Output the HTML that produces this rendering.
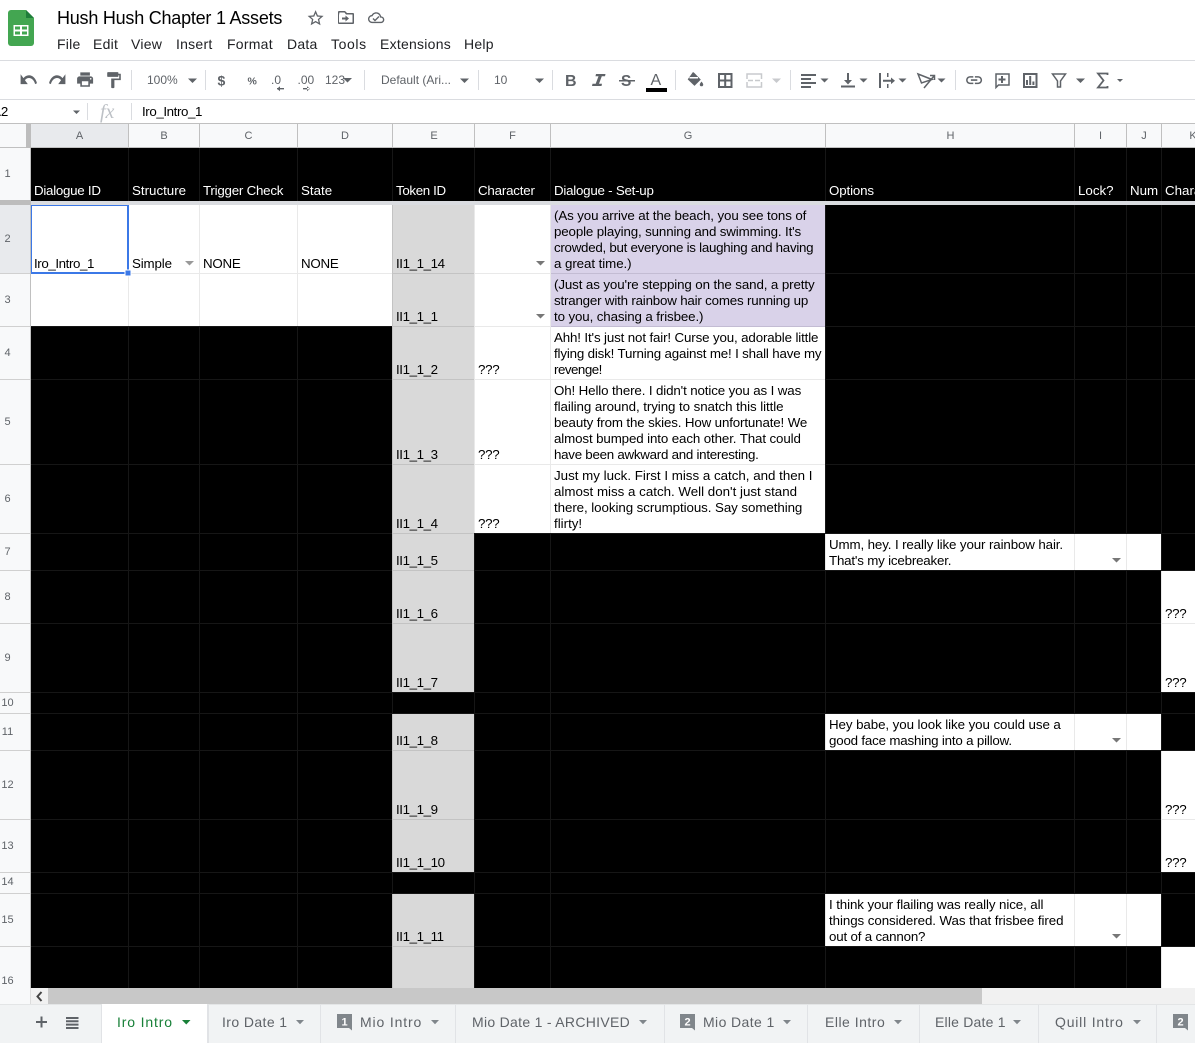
<!DOCTYPE html>
<html lang="en"><head><meta charset="utf-8"><title>Hush Hush Chapter 1 Assets</title>
<style>
html,body{margin:0;padding:0;background:#fff}
#p{position:relative;width:1195px;height:1043px;overflow:hidden;font-family:"Liberation Sans",Arial,sans-serif}
svg{position:absolute;left:0;top:0}
.t,.w,.m{position:absolute;white-space:pre;font-size:13.33px;line-height:16px;color:#000;margin-top:1px}
.w{color:#fff}
.m{font-size:14px;color:#202124;top:35px;letter-spacing:.25px}
.i{letter-spacing:-.4px}
.n{letter-spacing:-.3px}
</style></head><body><div id="p">
<svg width="1195" height="1043" viewBox="0 0 1195 1043" font-family="Liberation Sans, Arial, sans-serif">
<!-- header -->
<path d="M11 10h15l8 8v25a3 3 0 0 1-3 3H11a3 3 0 0 1-3-3V13a3 3 0 0 1 3-3z" fill="#43a651"/>
<path d="M26 10l8 8h-8z" fill="#1e7e3a"/>
<path d="M13.500 25h15v11h-15zM15 26.500v3h5v-3zM22 26.500v3h5v-3zM15 31.500v3h5v-3zM22 31.500v3h5v-3z" fill="#fff" fill-rule="evenodd"/>
<g fill="#5f6368">
<path transform="translate(306 8.500) scale(.8)" d="M22 9.240l-7.190-.62L12 2 9.190 8.630 2 9.240l5.460 4.730L5.820 21 12 17.270 18.180 21l-1.630-7.030L22 9.240zM12 15.400l-3.760 2.270 1-4.280-3.320-2.880 4.380-.38L12 6.100l1.710 4.040 4.380.38-3.320 2.880 1 4.280L12 15.400z"/>
<path fill-rule="evenodd" d="M339 11h6l2 2h6a1 1 0 0 1 1 1v9a1 1 0 0 1-1 1h-14a1 1 0 0 1-1-1V12a1 1 0 0 1 1-1zm0 4v7.500h13.500V14.500H346l-1.500-2H339.500z"/>
<path d="M345.500 15.500l3.500 3-3.500 3v-2h-3.500v-2h3.500z"/>
<path transform="translate(368 9.500) scale(.68)" d="M19.350 10.040C18.670 6.590 15.640 4 12 4 9.110 4 6.600 5.640 5.350 8.040 2.340 8.360 0 10.910 0 14c0 3.310 2.690 6 6 6h13c2.760 0 5-2.240 5-5 0-2.640-2.050-4.780-4.650-4.960zM19 18H6c-2.210 0-4-1.790-4-4 0-2.050 1.530-3.760 3.560-3.970l1.070-.11.5-.95C8.080 7.140 9.940 6 12 6c2.620 0 4.880 1.860 5.390 4.430l.3 1.500 1.530.11c1.560.1 2.780 1.410 2.780 2.960 0 1.650-1.350 3-3 3z"/>
</g>
<path d="M373 18.500l2 2 4-4" fill="none" stroke="#5f6368" stroke-width="1.400"/>
<rect y="60" width="1195" height="1" fill="#dadce0"/>
<rect y="99" width="1195" height="1" fill="#dadce0"/>
<!-- toolbar dividers -->
<g fill="#dadce0"><rect x="131" y="70" width="1" height="20"/><rect x="205" y="70" width="1" height="20"/><rect x="364" y="70" width="1" height="20"/><rect x="478" y="70" width="1" height="20"/><rect x="552" y="70" width="1" height="20"/><rect x="675" y="70" width="1" height="20"/><rect x="790" y="70" width="1" height="20"/><rect x="955" y="70" width="1" height="20"/><rect x="87" y="103" width="1" height="17"/><rect x="131" y="103" width="1" height="17"/></g>
<g fill="#5f6368">
<path transform="translate(19 66.500) scale(.8 1.100)" d="M12.500 8c-2.650 0-5.050.99-6.900 2.600L2 7v9h9l-3.620-3.620c1.390-1.160 3.160-1.880 5.120-1.880 3.540 0 6.550 2.310 7.600 5.500l2.370-.78C21.080 11.030 17.150 8 12.500 8z"/>
<path transform="translate(67 66.500) scale(-.8 1.100)" d="M12.500 8c-2.650 0-5.050.99-6.900 2.600L2 7v9h9l-3.620-3.620c1.390-1.160 3.160-1.880 5.120-1.880 3.540 0 6.550 2.310 7.600 5.500l2.370-.78C21.080 11.030 17.150 8 12.500 8z"/>
<path transform="translate(75.500 70) scale(.8)" d="M19 8H5c-1.660 0-3 1.340-3 3v6h4v4h12v-4h4v-6c0-1.660-1.340-3-3-3zm-3 11H8v-5h8v5zm3-7c-.55 0-1-.45-1-1s.45-1 1-1 1 .45 1 1-.45 1-1 1zm-1-9H6v4h12V3z"/>
<path transform="translate(104 70.500) scale(.8)" d="M18 4V3c0-.55-.45-1-1-1H5c-.55 0-1 .45-1 1v4c0 .55.45 1 1 1h12c.55 0 1-.45 1-1V6h1v4H9v11c0 .55.45 1 1 1h2c.55 0 1-.45 1-1v-9h8V4h-3z"/>
<!-- arrows -->
<path d="M188 78.500h9l-4.500 4.500zM343 78h9l-4.500 4.500zM460 78.500h9l-4.500 4.500zM535 78.500h9l-4.500 4.500zM820.500 78.500h8l-4 4zM859.500 78.500h8l-4 4zM898.500 78.500h8l-4 4zM937.500 78.500h8l-4 4zM1076 78.500h9l-4.500 4.500zM1117 79h6l-3 3zM73 110.500h7l-3.500 3.500z"/>
<!-- .0 arrows -->
<path d="M277 88h7v1.400h-7zM277 88.700l3-2.500v5zM303 88h7v1.400h-7zM310 88.700l-3-2.500v5z"/>
<!-- align -->
<path d="M801 74h15v2h-15zM801 78h10v2h-10zM801 82h15v2h-15zM801 86h10v2h-10z"/>
<path d="M841 85.500h14v2h-14zM847 73h2v7h3l-4 4.500-4-4.500h3z"/>
<path d="M879 73h2v15h-2zM887 73h1.500v4h-1.500zM887 84h1.500v4h-1.500zM883 79.800h8v-2.300l4 3.300-4 3.300v-2.300h-8z"/>
<path transform="translate(964.500 70.500) scale(.8)" d="M3.900 12c0-1.710 1.390-3.100 3.100-3.100h4V7H7c-2.760 0-5 2.240-5 5s2.240 5 5 5h4v-1.900H7c-1.710 0-3.100-1.390-3.100-3.100zM8 13h8v-2H8v2zm9-6h-4v1.900h4c1.710 0 3.100 1.390 3.100 3.100s-1.390 3.100-3.100 3.100h-4V17h4c2.760 0 5-2.240 5-5s-2.240-5-5-5z"/>
<path d="M1001 76h2v2.500h2.500v2H1003V83h-2v-2.500h-2.500v-2h2.500zM1026 80h2v5h-2zM1029.200 76h2v9h-2zM1032.400 81.500h2v3.500h-2z"/>
<!-- italic I -->
<path d="M596 74h9.500l-.5 2.200h-3.200l-2.800 7.600h3l-.5 2.200H592l.5-2.200h3.200l2.800-7.600h-3z"/>
<!-- paint bucket -->
<path d="M693 72l1.400 1 6.400 6.600-6.300 6.300-6.800-6.500z"/>
<path d="M701.500 81.500s1.700 2 1.700 3.100a1.700 1.700 0 0 1-3.400 0c0-1.100 1.700-3.100 1.700-3.100z"/>
</g>
<rect x="689.500" y="77" width="8.500" height="1.500" fill="#fff"/>
<g fill="none" stroke="#5f6368" stroke-width="2">
<path d="M719 74h12.500v13H719zM725.200 74v13M719 80.500h12.500"/>
<path d="M1024 74h12.500v13H1024z"/>
<path stroke-width="1.800" d="M1107.500 75V73.500h-9.500l5.500 7-5.500 7h9.500V86"/>
</g>
<g fill="none" stroke="#5f6368" stroke-width="1.500">
<path d="M996 87.500V74h13v11h-10.500z"/>
<path d="M1052.500 74h13l-5 7v6h-3v-6z"/>
<path d="M918 74l14 5.500-10.500 3.500z"/>
<path d="M924 88l10-12M930 75.500h4.500v4.500"/>
</g>
<g fill="none" stroke="#c8cacd" stroke-width="1.500">
<path d="M747 79v-5h14.500v5M747 82v5h14.500v-5M753 80.500h-5M755 80.500h5"/>
</g>
<path d="M772 78.500h9l-4.500 4.500z" fill="#c8cacd"/>
<rect x="646" y="88" width="21" height="4" fill="#000"/>
<g font-size="12" fill="#5f6368">
<text x="147" y="84">100%</text>
<text x="217.500" y="85.500" font-weight="bold" font-size="14">$</text>
<text x="247.500" y="84.500" font-weight="bold" font-size="10.500">%</text>
<text x="271" y="84">.0</text>
<text x="297.500" y="84">.00</text>
<text x="325" y="84">123</text>
<text x="381" y="84">Default (Ari...</text>
<text x="494" y="84">10</text>
<text x="565" y="86" font-weight="bold" font-size="16">B</text>
<text x="621" y="86" font-weight="bold" font-size="15.500">S</text>
<text x="650.500" y="85" font-size="16">A</text>
</g>
<rect x="619" y="80" width="16" height="1.500" fill="#5f6368"/>
<text x="100" y="118" font-family="Liberation Serif, serif" font-style="italic" font-size="20" fill="#bdc1c6">fx</text>
<!-- grid fills -->
<g shape-rendering="crispEdges">
<rect x="0" y="123" width="1195" height="866" fill="#f8f9fa"/>
<rect x="31" y="148" width="1164" height="840" fill="#000"/>
<rect x="31" y="205" width="361" height="121" fill="#fff"/>
<g fill="#d9d9d9"><rect x="392" y="205" width="82" height="487"/><rect x="392" y="714" width="82" height="158"/><rect x="392" y="894" width="82" height="94"/></g>
<rect x="474" y="205" width="77" height="328" fill="#fff"/>
<rect x="551" y="205" width="274" height="122" fill="#d9d2e9"/>
<rect x="551" y="327" width="274" height="206" fill="#fff"/>
<g fill="#fff"><rect x="825" y="534" width="336" height="36"/><rect x="825" y="714" width="336" height="36"/><rect x="825" y="894" width="336" height="52"/><rect x="1161" y="571" width="34" height="121"/><rect x="1161" y="751" width="34" height="121"/><rect x="1161" y="947" width="34" height="41"/></g>
<!-- grid lines -->
<g fill="#161616" style="mix-blend-mode:difference">
<rect x="128" y="148" width="1" height="840"/><rect x="199" y="148" width="1" height="840"/><rect x="297" y="148" width="1" height="840"/><rect x="392" y="148" width="1" height="840"/><rect x="474" y="148" width="1" height="840"/><rect x="550" y="148" width="1" height="840"/><rect x="825" y="148" width="1" height="840"/><rect x="1074" y="148" width="1" height="840"/><rect x="1126" y="148" width="1" height="840"/><rect x="1161" y="148" width="1" height="840"/>
<rect x="31" y="273" width="1164" height="1"/><rect x="31" y="326" width="1164" height="1"/><rect x="31" y="379" width="1164" height="1"/><rect x="31" y="464" width="1164" height="1"/><rect x="31" y="533" width="1164" height="1"/><rect x="31" y="570" width="1164" height="1"/><rect x="31" y="623" width="1164" height="1"/><rect x="31" y="692" width="1164" height="1"/><rect x="31" y="713" width="1164" height="1"/><rect x="31" y="750" width="1164" height="1"/><rect x="31" y="819" width="1164" height="1"/><rect x="31" y="872" width="1164" height="1"/><rect x="31" y="893" width="1164" height="1"/><rect x="31" y="946" width="1164" height="1"/>
</g>
<!-- column header -->
<rect x="0" y="123" width="1195" height="1" fill="#c0c0c0"/>
<rect x="31" y="124" width="97" height="23" fill="#e8eaed"/>
<rect x="0" y="147" width="1195" height="1" fill="#c0c0c0"/>
<g fill="#c0c0c0"><rect x="128" y="124" width="1" height="24"/><rect x="199" y="124" width="1" height="24"/><rect x="297" y="124" width="1" height="24"/><rect x="392" y="124" width="1" height="24"/><rect x="474" y="124" width="1" height="24"/><rect x="550" y="124" width="1" height="24"/><rect x="825" y="124" width="1" height="24"/><rect x="1074" y="124" width="1" height="24"/><rect x="1126" y="124" width="1" height="24"/><rect x="1161" y="124" width="1" height="24"/></g>
<rect x="26" y="124" width="5" height="24" fill="#bdbdbd"/>
<!-- row header -->
<rect x="0" y="205" width="30" height="68" fill="#e8eaed"/>
<rect x="30" y="148" width="1" height="841" fill="#c0c0c0"/>
<g fill="#d0d0d0"><rect y="273" width="30" height="1"/><rect y="326" width="30" height="1"/><rect y="379" width="30" height="1"/><rect y="464" width="30" height="1"/><rect y="533" width="30" height="1"/><rect y="570" width="30" height="1"/><rect y="623" width="30" height="1"/><rect y="692" width="30" height="1"/><rect y="713" width="30" height="1"/><rect y="750" width="30" height="1"/><rect y="819" width="30" height="1"/><rect y="872" width="30" height="1"/><rect y="893" width="30" height="1"/><rect y="946" width="30" height="1"/></g>
<!-- freeze row -->
<rect x="0" y="200" width="31" height="5" fill="#bdbdbd"/>
<rect x="31" y="201" width="1164" height="4" fill="#dadce0"/>
<!-- selection -->
<path d="M31 205h98v69H31zM32 206v66h95v-66z" fill="#3b78e7" fill-rule="evenodd"/>
<rect x="124.500" y="269.500" width="7" height="7" fill="#fff"/>
<rect x="125.500" y="270.500" width="5" height="5" fill="#3b78e7"/>
<!-- scrollbar -->
<rect x="0" y="988" width="1195" height="16" fill="#f1f1f1"/>
<rect x="0" y="988" width="30" height="16" fill="#f8f9fa"/>
<rect x="30" y="988" width="1" height="16" fill="#dcdcdc"/>
<rect x="31" y="988" width="17" height="16" fill="#f1f1f1"/>
<rect x="48" y="988" width="934" height="16" fill="#c8c8c8"/>
<rect x="0" y="1004" width="1195" height="39" fill="#f1f3f4"/>
<rect x="0" y="1004" width="1195" height="1" fill="#e3e5e6"/>
<rect x="102" y="1004" width="105" height="39" fill="#fff"/>
<g fill="#e1e3e6"><rect x="101" y="1005" width="1" height="38"/><rect x="207" y="1005" width="2" height="38"/><rect x="320" y="1005" width="1" height="38"/><rect x="455" y="1005" width="1" height="38"/><rect x="664" y="1005" width="1" height="38"/><rect x="807" y="1005" width="1" height="38"/><rect x="919" y="1005" width="1" height="38"/><rect x="1038" y="1005" width="1" height="38"/><rect x="1156" y="1005" width="1" height="38"/></g>
</g>
<!-- cell dropdown arrows -->
<path d="M185 261h9l-4.500 4.500z" fill="#999"/>
<path d="M536 261h9l-4.500 4.500zM536 314h9l-4.500 4.500zM1112 558h9l-4.500 4.500zM1112 738h9l-4.500 4.500zM1112 934h9l-4.500 4.500z" fill="#777"/>
<!-- column letters -->
<g font-size="11" fill="#5f6368" text-anchor="middle">
<text x="79.500" y="139">A</text><text x="164" y="139">B</text><text x="248.500" y="139">C</text><text x="345" y="139">D</text><text x="434" y="139">E</text><text x="512.500" y="139">F</text><text x="688" y="139">G</text><text x="950.500" y="139">H</text><text x="1100.500" y="139">I</text><text x="1144" y="139">J</text><text x="1193" y="139">K</text>
<text x="7.500" y="177">1</text><text x="7.500" y="242">2</text><text x="7.500" y="303">3</text><text x="7.500" y="356">4</text><text x="7.500" y="425">5</text><text x="7.500" y="502">6</text><text x="7.500" y="555">7</text><text x="7.500" y="600">8</text><text x="7.500" y="661">9</text><text x="7.500" y="706">10</text><text x="7.500" y="735">11</text><text x="7.500" y="788">12</text><text x="7.500" y="849">13</text><text x="7.500" y="885">14</text><text x="7.500" y="923">15</text><text x="7.500" y="984">16</text>
</g>
<!-- bottom controls -->
<path d="M41.500 992l-4 4.500 4 4.500" fill="none" stroke="#444" stroke-width="2"/>
<path d="M36 1021h11v2H36zM40.500 1016.500h2v11h-2z" fill="#5f6368"/>
<path d="M66 1017h12.500v2H66zM66 1020.300h12.500v2H66zM66 1023.600h12.500v2H66zM66 1027h12.500v2H66z" fill="#5f6368"/>
<!-- tab arrows -->
<path d="M182 1020h8.500l-4.250 4.500z" fill="#188038"/>
<path d="M296 1020h8l-4 4.200zM431 1020h8l-4 4.200zM639 1020h8l-4 4.200zM783 1020h8l-4 4.200zM894 1020h8l-4 4.200zM1013 1020h8l-4 4.200zM1133 1020h8l-4 4.200z" fill="#80868b"/>
<!-- badges -->
<path d="M337 1014h15v16.500l-3-2.500h-12zM680 1014h15v16.500l-3-2.500h-12zM1173 1014h15v16.500l-3-2.500h-12z" fill="#80868b"/>
<g font-size="11" font-weight="bold" fill="#fff" text-anchor="middle"><text x="344.500" y="1025.500">1</text><text x="687.500" y="1025.500">2</text><text x="1180.500" y="1025.500">2</text></g>
<g font-size="14" fill="#5f6368">
<text x="117" y="1027" fill="#188038" letter-spacing=".85">Iro Intro</text>
<text x="222" y="1027" letter-spacing=".4">Iro Date 1</text>
<text x="360" y="1027" letter-spacing=".85">Mio Intro</text>
<text x="472" y="1027" letter-spacing=".3">Mio Date 1 - ARCHIVED</text>
<text x="703" y="1027" letter-spacing=".4">Mio Date 1</text>
<text x="825" y="1027" letter-spacing=".5">Elle Intro</text>
<text x="935" y="1027" letter-spacing=".2">Elle Date 1</text>
<text x="1055" y="1027" letter-spacing=".8">Quill Intro</text>
</g>
</svg>

<div class="t" style="left:57px;top:7px;margin-top:0;font-size:18px;line-height:22px;letter-spacing:-.23px">Hush Hush Chapter 1 Assets</div>
<div class="m" style="left:57px">File</div><div class="m" style="left:93px">Edit</div><div class="m" style="left:131px">View</div><div class="m" style="left:176px">Insert</div><div class="m" style="left:227px">Format</div><div class="m" style="left:287px">Data</div><div class="m" style="left:331px;letter-spacing:.6px">Tools</div><div class="m" style="left:380px">Extensions</div><div class="m" style="left:464px">Help</div>

<div class="t" style="left:-8px;top:104px;margin-top:0">A2</div>
<div class="t i" style="left:142px;top:104px;margin-top:0">Iro_Intro_1</div>

<div class="w" style="left:34px;top:182px;letter-spacing:-.27px">Dialogue ID</div>
<div class="w" style="left:132px;top:182px">Structure</div>
<div class="w" style="left:203px;top:182px;letter-spacing:-.23px">Trigger Check</div>
<div class="w" style="left:301px;top:182px">State</div>
<div class="w" style="left:396px;top:182px;letter-spacing:-.35px">Token ID</div>
<div class="w" style="left:478px;top:182px;letter-spacing:-.2px">Character</div>
<div class="w" style="left:554px;top:182px;letter-spacing:-.24px">Dialogue - Set-up</div>
<div class="w" style="left:829px;top:182px;letter-spacing:-.14px">Options</div>
<div class="w" style="left:1078px;top:182px">Lock?</div>
<div class="w" style="left:1130px;top:182px">Num</div>
<div class="w" style="left:1165px;top:182px">Chara</div>

<div class="t i" style="left:34px;top:255px">Iro_Intro_1</div>
<div class="t" style="left:132px;top:255px;letter-spacing:-.15px">Simple</div>
<div class="t" style="left:203px;top:255px;letter-spacing:-.25px">NONE</div>
<div class="t" style="left:301px;top:255px;letter-spacing:-.25px">NONE</div>

<div class="t i" style="left:396px;top:255px">II1_1_14</div>
<div class="t i" style="left:396px;top:308px">II1_1_1</div>
<div class="t i" style="left:396px;top:361px">II1_1_2</div>
<div class="t i" style="left:396px;top:446px">II1_1_3</div>
<div class="t i" style="left:396px;top:515px">II1_1_4</div>
<div class="t i" style="left:396px;top:552px">II1_1_5</div>
<div class="t i" style="left:396px;top:605px">II1_1_6</div>
<div class="t i" style="left:396px;top:674px">II1_1_7</div>
<div class="t i" style="left:396px;top:732px">II1_1_8</div>
<div class="t i" style="left:396px;top:801px">II1_1_9</div>
<div class="t i" style="left:396px;top:854px">II1_1_10</div>
<div class="t i" style="left:396px;top:928px">II1_1_11</div>

<div class="t n" style="left:478px;top:361px">???</div>
<div class="t n" style="left:478px;top:446px">???</div>
<div class="t n" style="left:478px;top:515px">???</div>

<div class="t" style="left:554px;top:207px"><span style="letter-spacing:-.11px">(As you arrive at the beach, you see tons of</span>
<span style="letter-spacing:-.14px">people playing, sunning and swimming. It's</span>
<span style="letter-spacing:-.27px">crowded, but everyone is laughing and having</span>
<span style="letter-spacing:-.07px">a great time.)</span></div>
<div class="t" style="left:554px;top:276px"><span style="letter-spacing:-.11px">(Just as you're stepping on the sand, a pretty</span>
<span style="letter-spacing:-.19px">stranger with rainbow hair comes running up</span>
<span style="letter-spacing:-.12px">to you, chasing a frisbee.)</span></div>
<div class="t" style="left:554px;top:329px"><span style="letter-spacing:-.14px">Ahh! It's just not fair! Curse you, adorable little</span>
<span style="letter-spacing:-.17px">flying disk! Turning against me! I shall have my</span>
<span style="letter-spacing:-.5px">revenge!</span></div>
<div class="t" style="left:554px;top:382px"><span style="letter-spacing:-.13px">Oh! Hello there. I didn't notice you as I was</span>
<span style="letter-spacing:-.07px">flailing around, trying to snatch this little</span>
<span style="letter-spacing:-.14px">beauty from the skies. How unfortunate! We</span>
<span style="letter-spacing:-.12px">almost bumped into each other. That could</span>
<span style="letter-spacing:-.26px">have been awkward and interesting.</span></div>
<div class="t" style="left:554px;top:467px">Just my luck. First I miss a catch, and then I
almost miss a catch. Well don't just stand
<span style="letter-spacing:-.07px">there, looking scrumptious. Say something</span>
flirty!</div>

<div class="t" style="left:829px;top:536px"><span style="letter-spacing:-.12px">Umm, hey. I really like your rainbow hair.</span>
<span style="letter-spacing:-.19px">That's my icebreaker.</span></div>
<div class="t" style="left:829px;top:716px"><span style="letter-spacing:-.08px">Hey babe, you look like you could use a</span>
<span style="letter-spacing:-.19px">good face mashing into a pillow.</span></div>
<div class="t" style="left:829px;top:896px"><span style="letter-spacing:-.1px">I think your flailing was really nice, all</span>
<span style="letter-spacing:-.07px">things considered. Was that frisbee fired</span>
<span style="letter-spacing:-.19px">out of a cannon?</span></div>

<div class="t n" style="left:1165px;top:605px">???</div>
<div class="t n" style="left:1165px;top:674px">???</div>
<div class="t n" style="left:1165px;top:801px">???</div>
<div class="t n" style="left:1165px;top:854px">???</div>
</div></body></html>
